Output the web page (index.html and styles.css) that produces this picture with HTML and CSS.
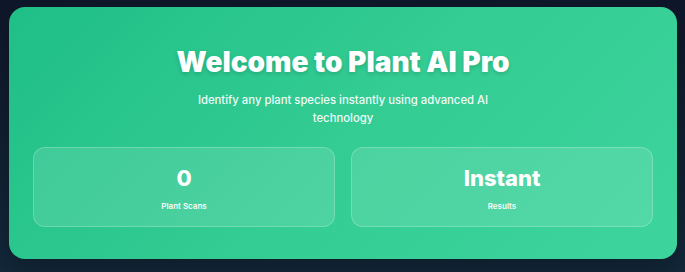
FILE: index.html
```html
<!doctype html>
<html lang="en">
    <head>
        <meta charset="UTF-8" />
        <meta name="viewport" content="width=device-width, initial-scale=1.0" />
        <title>Plant AI Pro</title>
        <link rel="stylesheet" href="styles.css">
    </head>
    <body>
        <section class="hero">
            <h1 class="hero-title">Welcome to Plant AI Pro</h1>
            <p class="hero-text">
                Identify any plant species instantly using advanced AI
                technology
            </p>
            <div class="stats">
                <div class="stat">
                    <div class="stat-value">0</div>
                    <div class="stat-label">Plant Scans</div>
                </div>
                <div class="stat">
                    <div class="stat-value">Instant</div>
                    <div class="stat-label">Results</div>
                </div>
            </div>
        </section>
    </body>
</html>
```

FILE: styles.css
```css
html,
body {
    height: 100%;
}

body {
    margin: 0;
    padding: 7px 8px 0 9px;
    box-sizing: border-box;
    font-family: Inter, "Noto Sans", sans-serif;
    background: linear-gradient(180deg, #0f172a 0%, #13283a 100%);
    color: #fff;
}

.hero {
    background: linear-gradient(135deg, #1fbf87 0%, #33cc93 50%, #3dd59d 100%);
    border-radius: 16px;
    padding: 39px 24px 32px;
    text-align: center;
    box-shadow: 0 10px 25px rgba(0, 0, 0, 0.25);
}

.hero-title {
    margin: 0 0 11px;
    font-size: 28px;
    font-weight: 900;
    line-height: 1.2;
    text-shadow: 0 2px 4px rgba(0, 0, 0, 0.15);
}

.hero-text {
    margin: 0 auto 20px;
    max-width: 300px;
    font-size: 11.3px;
    font-weight: 500;
    line-height: 18px;
    opacity: 0.92;
}

.stats {
    display: grid;
    grid-template-columns: 1fr 1fr;
    gap: 16px;
}

.stat {
    background: rgba(255, 255, 255, 0.12);
    border: 1px solid rgba(255, 255, 255, 0.22);
    border-radius: 12px;
    padding: 16px 16px 15px;
}

.stat-value {
    font-size: 22px;
    font-weight: 800;
    line-height: 1.3;
}

.stat-label {
    margin-top: 9px;
    font-size: 8px;
    font-weight: 600;
    opacity: 0.95;
}
```
